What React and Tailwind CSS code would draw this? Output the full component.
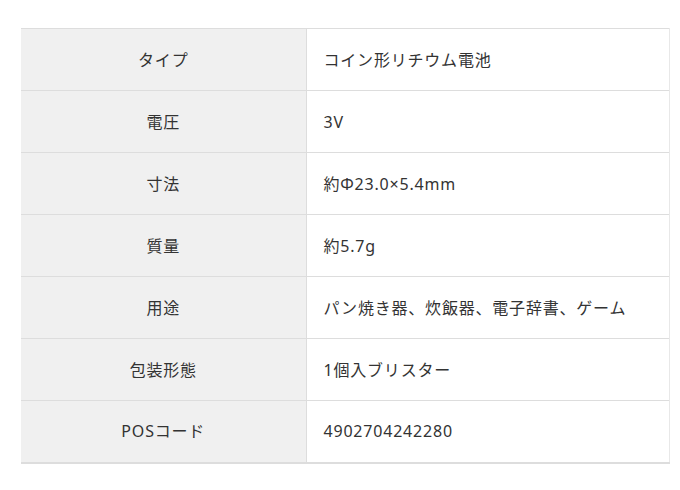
const ROWS = [
  ['タイプ', 'コイン形リチウム電池'],
  ['電圧', '3V'],
  ['寸法', '約Φ23.0×5.4mm'],
  ['質量', '約5.7g'],
  ['用途', 'パン焼き器、炊飯器、電子辞書、ゲーム'],
  ['包装形態', '1個入ブリスター'],
  ['POSコード', '4902704242280'],
];

export default function App() {
  return (
    <div
      className="min-h-[490px] bg-white px-[21px] pt-[28px] text-[#333] text-[16px] tracking-[0.05em]"
      style={{ fontFamily: '"Noto Sans", "Noto Sans CJK JP", sans-serif' }}
    >
      <table className="w-[649px] border-collapse border-b-2 border-[#ddd]">
        <tbody>
          {ROWS.map(([label, value]) => (
            <tr key={label} className="h-[62px] border-t border-[#ddd]">
              <th className="w-[285px] bg-[#f0f0f0] border-r border-[#ddd] text-center font-normal">
                {label}
              </th>
              <td className="border-r border-[#e8e8e8] pl-[17px] text-left">{value}</td>
            </tr>
          ))}
        </tbody>
      </table>
    </div>
  );
}
